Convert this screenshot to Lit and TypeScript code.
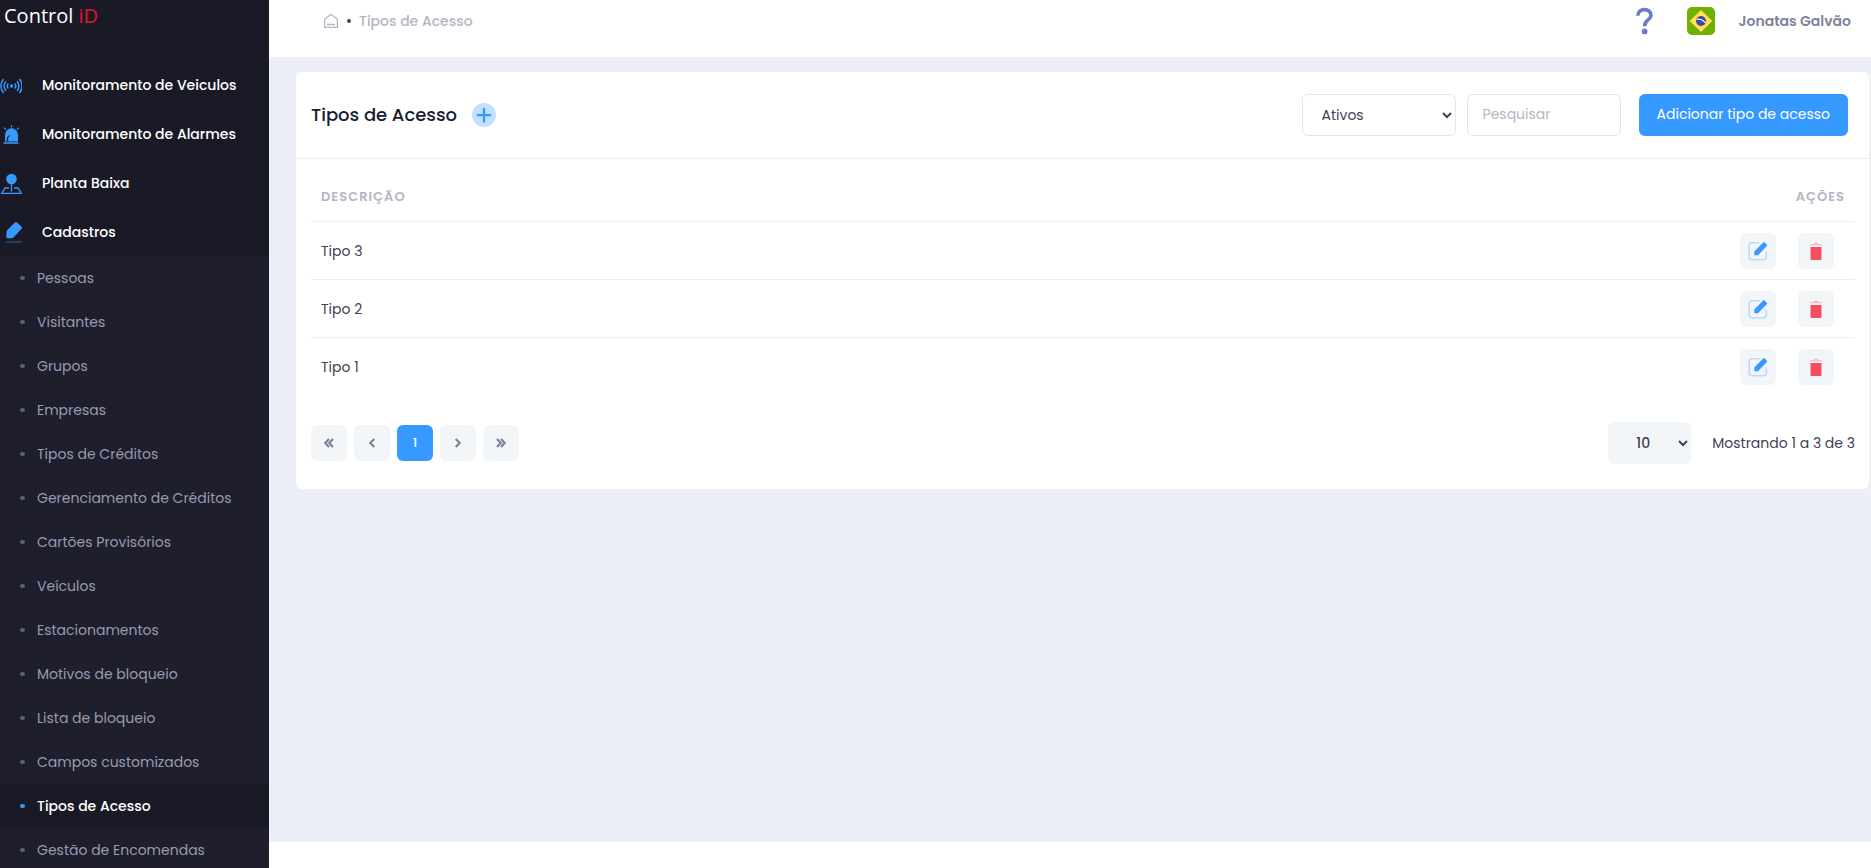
import { LitElement, html, css, svg } from "lit";
import { customElement, state } from "lit/decorators.js";
import { classMap } from "lit/directives/class-map.js";

const menuIcons = {
  signal: svg`<svg viewBox="0 0 22 22" width="22" height="22" fill="none" stroke="#3699ff" stroke-width="1.5">
    <circle cx="11.500" cy="11" r="1.700" fill="#3699ff" stroke="none" />
    <path d="M8.400 8.400a3.800 3.800 0 0 0 0 5.200M14.600 8.400a3.800 3.800 0 0 1 0 5.200M6 6.200a7 7 0 0 0 0 9.600M17 6.200a7 7 0 0 1 0 9.600M3.600 4a10.400 10.400 0 0 0 0 14M19.400 4a10.400 10.400 0 0 1 0 14" />
  </svg>`,
  alarm: svg`<svg viewBox="0 0 22 22" width="22" height="22" fill="none" stroke="#3699ff" stroke-width="1.3">
    <path d="M5 17.500V10.800a6.300 6.300 0 0 1 13 0V17.500Z" fill="#3699ff" stroke="none" />
    <path d="M3.500 19h15M11.500 1.200v2.400M4.300 3.800l1.600 1.600M18.700 3.800l-1.600 1.600" />
    <path d="M9.500 11.500q-2 .8-2 3v3" stroke="#1a1a27" />
  </svg>`,
  pin: svg`<svg viewBox="0 0 22 22" width="22" height="22" fill="none" stroke="#3699ff" stroke-width="1.300">
    <circle cx="11.500" cy="6" r="5.300" fill="#3699ff" stroke="none" />
    <path d="M11.500 11v7.500M9 15H5l-3.300 5.400h19.600L18 15h-4" />
  </svg>`,
  pencil: svg`<svg viewBox="0 0 22 24" width="22" height="24">
    <path d="M6.300 14.200l.6-4.600 8-8.200a1.500 1.500 0 0 1 2 0l4.700 4.300a1.500 1.500 0 0 1 0 2L14 16a3 3 0 0 1-2 1.200H8a1.600 1.600 0 0 1-1.700-1.700Z" fill="#3699ff" />
    <rect x="6" y="20" width="16" height="2" rx="1" fill="#3699ff" opacity=".3" />
  </svg>`,
};

const mainItems = [
  { icon: menuIcons.signal, label: "Monitoramento de Veiculos" },
  { icon: menuIcons.alarm, label: "Monitoramento de Alarmes" },
  { icon: menuIcons.pin, label: "Planta Baixa" },
  { icon: menuIcons.pencil, label: "Cadastros" },
];

const subItems = [
  "Pessoas",
  "Visitantes",
  "Grupos",
  "Empresas",
  "Tipos de Créditos",
  "Gerenciamento de Créditos",
  "Cartões Provisórios",
  "Veículos",
  "Estacionamentos",
  "Motivos de bloqueio",
  "Lista de bloqueio",
  "Campos customizados",
  "Tipos de Acesso",
  "Gestão de Encomendas",
];

@customElement("app-sidebar")
export class AppSidebar extends LitElement {
  static styles = css`
    :host {
      display: block;
      flex: none;
      width: 269px;
      height: 100vh;
      overflow: hidden;
      background: #1a1a27;
    }
    a {
      color: inherit;
      text-decoration: none;
    }
    .brand {
      display: flex;
      box-sizing: border-box;
      height: 57px;
      padding: 2px 4px;
      font: 400 20px/28px "Open Sans", sans-serif;
      color: #fff;
      white-space: pre;
    }
    .brand-accent {
      color: #e0152c;
    }
    .menu,
    .submenu {
      list-style: none;
      margin: 0;
      padding: 0;
    }
    .menu {
      padding-top: 3px;
    }
    .menu-link {
      display: flex;
      align-items: center;
      gap: 20px;
      height: 49px;
      color: #fff;
      font-weight: 500;
    }
    .menu-icon {
      display: flex;
      justify-content: center;
      width: 22px;
      padding-top: 2px;
    }
    .submenu {
      background: #1e1e2d;
    }
    .sub-link {
      display: flex;
      align-items: center;
      gap: 12px;
      height: 44px;
      padding-left: 20px;
      color: #989bb1;
    }
    .bullet {
      width: 5px;
      height: 4px;
      border-radius: 2px;
      background: #5c5e81;
    }
    .active {
      background: #1a1a27;
      color: #fff;
      font-weight: 500;
    }
    .active .bullet {
      background: #3699ff;
    }
  `;

  render() {
    return html`
      <a class="brand" href="#" aria-label="Control iD"
        ><span>Control </span><span class="brand-accent">iD</span></a
      >
      <nav>
        <ul class="menu">
          ${mainItems.map(
            (item) => html`<li>
              <a class="menu-link" href="#"><span class="menu-icon">${item.icon}</span>${item.label}</a>
            </li>`
          )}
        </ul>
        <ul class="submenu">
          ${subItems.map(
            (label) => html`<li>
              <a class=${classMap({ "sub-link": true, active: label === "Tipos de Acesso" })} href="#"
                ><span class="bullet"></span>${label}</a
              >
            </li>`
          )}
        </ul>
      </nav>
    `;
  }
}

@customElement("app-topbar")
export class AppTopbar extends LitElement {
  static styles = css`
    :host {
      display: flex;
      justify-content: space-between;
      align-items: center;
      box-sizing: border-box;
      height: 57px;
      padding: 0 20px 16px 54px;
      background: #fff;
    }
    .crumbs,
    .tools {
      display: flex;
      align-items: center;
    }
    .crumbs {
      gap: 8px;
      color: #b5b5c3;
      font-weight: 500;
    }
    .crumbs a {
      display: flex;
      color: inherit;
      text-decoration: none;
    }
    .dot {
      width: 4px;
      height: 4px;
      border-radius: 50%;
      background: #3f4254;
    }
    button {
      display: flex;
      padding: 0;
      border: 0;
      background: none;
      font: inherit;
      cursor: pointer;
    }
    .flag {
      margin: 0 24px 0 32px;
    }
    .user {
      color: #7e8299;
      font-weight: 600;
    }
  `;

  render() {
    return html`
      <nav class="crumbs">
        <a href="#" aria-label="Início">
          <svg width="16" height="16" viewBox="0 0 16 16" fill="none" stroke="#b5b5c3" stroke-width="1.3">
            <path d="M1.600 6.200 8 1.200l6.400 5V14.300H1.600ZM4 11.500h8" />
          </svg>
        </a>
        <span class="dot"></span>
        <a href="#">Tipos de Acesso</a>
      </nav>
      <div class="tools">
        <button aria-label="Ajuda">
          <svg width="20" height="28" viewBox="0 0 20 28" fill="none" stroke="#6a7bc8" stroke-width="3.600">
            <path d="M2.800 8.800C2.800 0.600 16 0.600 16 8.400C16 13 9.600 12.600 9.600 19.200" />
            <circle cx="9.600" cy="24.400" r="2.900" fill="#6a7bc8" stroke="none" />
          </svg>
        </button>
        <button class="flag" aria-label="Idioma">
          <svg width="28" height="28" viewBox="0 0 28 28">
            <rect width="28" height="28" rx="5" fill="#73af00" />
            <path d="M14 3 25.300 14 14 25 2.700 14Z" fill="#ffe15a" />
            <circle cx="14" cy="14" r="5" fill="#41479b" />
            <path d="M9.500 12.300q5.500-.6 9 3.600" fill="none" stroke="#f5f5f5" stroke-width="1.200" />
          </svg>
        </button>
        <button class="user">Jonatas Galvão</button>
      </div>
    `;
  }
}

@customElement("access-types-card")
export class AccessTypesCard extends LitElement {
  @state() private rows = ["Tipo 3", "Tipo 2", "Tipo 1"];

  static styles = css`
    :host {
      display: block;
      border-radius: 6px;
      background: #fff;
    }
    button,
    input,
    select {
      box-sizing: border-box;
      margin: 0;
      border: 0;
      border-radius: 6px;
      font: inherit;
      color: #3f4254;
    }
    button {
      padding: 0;
      cursor: pointer;
    }
    svg {
      display: block;
    }
    .head {
      display: flex;
      align-items: center;
      justify-content: space-between;
      height: 86px;
      padding: 0 21px 0 15px;
      border-bottom: 1px solid #ebedf3;
    }
    .title {
      display: flex;
      align-items: center;
      gap: 15px;
    }
    h1 {
      margin: 0;
      font-size: 18px;
      font-weight: 500;
      color: #181c32;
    }
    .plus {
      background: none;
    }
    .filters {
      display: flex;
    }
    .field {
      width: 154px;
      height: 42px;
      margin-right: 11px;
      border: 1px solid #e4e6ef;
      background: #fff;
    }
    select.field {
      padding: 0 4px 0 15px;
    }
    input.field {
      margin-right: 18px;
      padding: 0 15px 2px;
    }
    input::placeholder {
      color: #b5b5c3;
      opacity: 1;
    }
    .add {
      height: 42px;
      padding: 0 18px 2px;
      background: #3699ff;
      color: #fff;
    }
    .body {
      padding: 15px 14px 25px 15px;
    }
    table {
      width: 100%;
      border-collapse: collapse;
    }
    th {
      height: 45px;
      padding: 0 10px 2px;
      text-align: left;
      font-size: 13px;
      font-weight: 600;
      letter-spacing: 1px;
      text-transform: uppercase;
      color: #b5b5c3;
    }
    td {
      height: 57px;
      padding: 0 10px;
      border-top: 1px solid #ebedf3;
    }
    .right {
      text-align: right;
    }
    .actions {
      display: flex;
      justify-content: flex-end;
      gap: 22px;
      padding-right: 11px;
    }
    .square {
      display: grid;
      place-items: center;
      width: 36px;
      height: 36px;
      background: #f3f6f9;
      color: #7e8299;
    }
    .foot {
      display: flex;
      align-items: center;
      justify-content: space-between;
      padding-top: 27px;
    }
    .pages,
    .summary {
      display: flex;
      align-items: center;
    }
    .pages {
      gap: 7px;
    }
    .current {
      background: #3699ff;
      color: #fff;
      font-size: 13px;
      font-weight: 500;
    }
    .size {
      width: 83px;
      height: 42px;
      margin-right: 21px;
      padding: 0 4px 0 24px;
      background: #f3f6f9;
      font-weight: 500;
    }
  `;

  private chevrons(path: string) {
    return html`<svg width="14" height="14" viewBox="0 0 14 14" fill="none" stroke="#7e8299" stroke-width="2.200">
      <path d=${path} />
    </svg>`;
  }

  render() {
    return html`
      <header class="head">
        <div class="title">
          <h1>Tipos de Acesso</h1>
          <button class="plus" aria-label="Adicionar">
            <svg width="24" height="24" viewBox="0 0 24 24">
              <circle cx="12" cy="12" r="12" fill="#3699ff" opacity=".3" />
              <path d="M12 6v12.500M5.800 12.200h12.400" stroke="#3699ff" stroke-width="2.300" stroke-linecap="round" />
            </svg>
          </button>
        </div>
        <div class="filters">
          <select class="field" aria-label="Situação">
            <option>Ativos</option>
            <option>Inativos</option>
          </select>
          <input class="field" type="text" placeholder="Pesquisar" aria-label="Pesquisar" />
          <button class="add">Adicionar tipo de acesso</button>
        </div>
      </header>
      <div class="body">
        <table>
          <thead>
            <tr>
              <th>Descrição</th>
              <th class="right">Ações</th>
            </tr>
          </thead>
          <tbody>
            ${this.rows.map(
              (name) => html`<tr>
                <td>${name}</td>
                <td>
                  <div class="actions">
                    <button class="square" aria-label="Editar ${name}">
                      <svg width="20" height="20" viewBox="0 0 20 20">
                        <path
                          d="M11.500 1.800H4A2.800 2.800 0 0 0 1.200 4.600V16A2.800 2.800 0 0 0 4 18.800H15.500A2.800 2.800 0 0 0 18.300 16V10.500"
                          fill="none"
                          stroke="#3699ff"
                          stroke-opacity=".3"
                          stroke-width="1.600"
                        />
                        <path d="M6.300 14.300V10.600L15.200 1.400a1 1 0 0 1 1.400 0L18.900 3.700a1 1 0 0 1 0 1.300L10 14.300Z" fill="#3699ff" />
                      </svg>
                    </button>
                    <button class="square" aria-label="Excluir ${name}">
                      <svg width="16" height="20" viewBox="0 0 16 20">
                        <path d="M2.500 6H13.500V18a1 1 0 0 1-1 1H3.500a1 1 0 0 1-1-1Z" fill="#f64e60" />
                        <path d="M5.800 3V2.600a.8.8 0 0 1 .8-.8H9.400a.8.8 0 0 1 .8.800V3H14V4.300H2V3Z" fill="#f64e60" opacity=".35" />
                      </svg>
                    </button>
                  </div>
                </td>
              </tr>`
            )}
          </tbody>
        </table>
        <footer class="foot">
          <div class="pages">
            <button class="square" aria-label="Primeira">${this.chevrons("M7 3 3.300 7 7 11M11 3 7.300 7l3.700 4")}</button>
            <button class="square" aria-label="Anterior">${this.chevrons("M9.300 3 5.300 7l4 4")}</button>
            <button class="square current">1</button>
            <button class="square" aria-label="Próxima">${this.chevrons("M4.700 3l4 4-4 4")}</button>
            <button class="square" aria-label="Última">${this.chevrons("M3 3 6.700 7 3 11M7 3l3.700 4L7 11")}</button>
          </div>
          <div class="summary">
            <select class="size" aria-label="Itens por página">
              <option>10</option>
              <option>25</option>
              <option>50</option>
            </select>
            <span>Mostrando 1 a 3 de 3</span>
          </div>
        </footer>
      </div>
    `;
  }
}

@customElement("app-root")
export class AppRoot extends LitElement {
  static styles = css`
    :host {
      display: flex;
      height: 100vh;
      overflow: hidden;
      font: 400 14px/20px Poppins, Inter, sans-serif;
      color: #3f4254;
      background: #fff;
    }
    .page {
      display: flex;
      flex-direction: column;
      flex: 1;
      min-width: 0;
    }
    .content {
      flex: 1;
      padding: 15px 2px 15px 27px;
      background: #eceff8;
    }
    .footer {
      height: 26px;
      background: #fff;
    }
  `;

  render() {
    return html`
      <app-sidebar></app-sidebar>
      <div class="page">
        <app-topbar></app-topbar>
        <main class="content"><access-types-card></access-types-card></main>
        <footer class="footer"></footer>
      </div>
    `;
  }
}
